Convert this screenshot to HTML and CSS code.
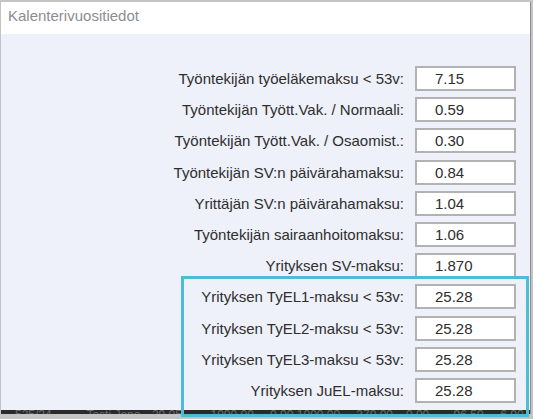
FILE: index.html
```html
<!DOCTYPE html>
<html lang="fi">
<head>
    <meta charset="UTF-8">
    <title>Kalenterivuositiedot</title>
    <link rel="stylesheet" href="styles.css">
</head>
<body>

    <div class="window">
        <!-- Title bar -->
        <div class="title">Kalenterivuositiedot</div>

        <!-- Rates form -->
        <div class="content">
            <div class="form">
                <label>Työntekijän työeläkemaksu &lt; 53v:</label>
                <div class="field">7.15</div>
                <label>Työntekijän Tyött.Vak. / Normaali:</label>
                <div class="field">0.59</div>
                <label>Työntekijän Tyött.Vak. / Osaomist.:</label>
                <div class="field">0.30</div>
                <label>Työntekijän SV:n päivärahamaksu:</label>
                <div class="field">0.84</div>
                <label>Yrittäjän SV:n päivärahamaksu:</label>
                <div class="field">1.04</div>
                <label>Työntekijän sairaanhoitomaksu:</label>
                <div class="field">1.06</div>
                <label>Yrityksen SV-maksu:</label>
                <div class="field">1.870</div>
                <label>Yrityksen TyEL1-maksu &lt; 53v:</label>
                <div class="field">25.28</div>
                <label>Yrityksen TyEL2-maksu &lt; 53v:</label>
                <div class="field">25.28</div>
                <label>Yrityksen TyEL3-maksu &lt; 53v:</label>
                <div class="field">25.28</div>
                <label>Yrityksen JuEL-maksu:</label>
                <div class="field">25.28</div>
            </div>
        </div>

        <!-- Table row peeking out below the dialog -->
        <div class="table-peek">
            <span class="c1">525/24</span>
            <span class="c2">Testi Jepo</span>
            <span class="c3">29.05</span>
            <span class="c4">1000.00</span>
            <span class="c5">0.00</span>
            <span class="c6">1000.00</span>
            <span class="c7">370.00</span>
            <span class="c8">0.00</span>
            <span class="c9">96.50</span>
            <span class="c10">6.90</span>
        </div>

        <!-- Highlight annotation -->
        <div class="highlight"></div>
    </div>

</body>
</html>
```

FILE: styles.css
```css
body {
    margin: 0;
    height: 419px;
    overflow: hidden;
    background: #c4c4c6;
    font-family: 'Liberation Sans', Arial, sans-serif;
}
.window {
    position: relative;
    margin: 2px 0 0 1px;
    width: 529px;
    border-right: 1px solid #8e8e90;
}
/* Title bar */
.title {
    height: 27px;
    padding: 5px 0 0 7px;
    background: #ffffff;
    color: #8c8c92;
    font-size: 15px;
    line-height: 17px;
}
.content {
    height: 376px;
    background: #eef1f9;
}
.form {
    display: grid;
    grid-template-columns: 1fr 101px;
    column-gap: 11px;
    row-gap: 6.2px;
    padding: 32px 14px 0 0;
    align-items: center;
}
.form label {
    text-align: right;
    color: #2e2e2e;
    font-size: 15px;
    white-space: nowrap;
}
.field {
    height: 21px;
    border: 2px solid #b2b2b2;
    background: #ffffff;
    padding-left: 18px;
    color: #2e2e2e;
    font-size: 15px;
    line-height: 21px;
}
/* Bottom strip */
.table-peek {
    display: flex;
    height: 4px;
    overflow: hidden;
    background: #2a2a2a;
    color: #6a6a6a;
    font-size: 12px;
    line-height: 12px;
}
.table-peek span {
    margin-top: -1px;
}
.c1 { margin-left: 14px; width: 72px; }
.c2 { width: 66px; }
.c3 { width: 59px; }
.c4 { width: 60px; }
.c5 { width: 27px; }
.c6 { width: 60px; }
.c7 { width: 50px; }
.c8 { width: 48px; }
.c9 { width: 47px; }
.c10 { width: 30px; }
.highlight {
    position: absolute;
    left: 180px;
    top: 274px;
    width: 342px;
    height: 135px;
    border: 3px solid #4dbdd6;
    pointer-events: none;
}
```
